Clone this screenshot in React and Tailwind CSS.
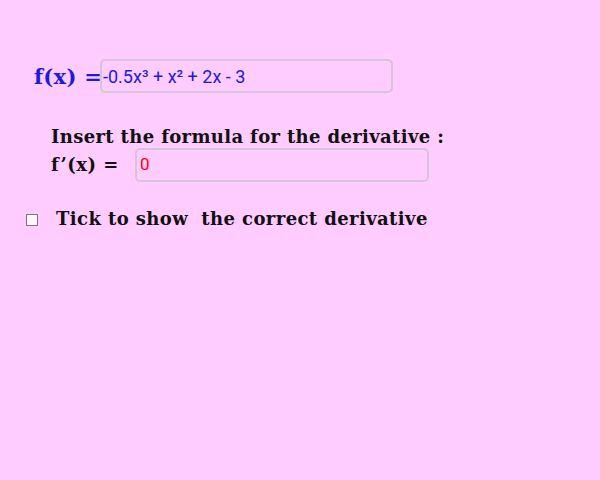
export default function App() {
  const serif = { fontFamily: '"DejaVu Serif", serif' };
  return (
    <div className="w-[600px] h-[480px] bg-[#ffccff] overflow-hidden relative">
      <div className="flex items-center pl-[34px] pt-[59px]">
        <span className="w-[66px] text-[21px] font-bold text-[#1a1ae0] leading-none whitespace-pre tracking-[0.3px]" style={serif}>f(x) =</span>
        <div className="w-[293px] h-[34px] border-2 border-[#d8c4d8] rounded-[5px] flex items-center pl-[1px] text-[18px] text-[#1a1ae0]" style={{ fontFamily: 'Roboto, sans-serif' }}>
          -0.5x³ + x² + 2x - 3
        </div>
      </div>
      <div className="pl-[51px] mt-[33px]">
        <div className="text-[18px] font-bold text-[#111] leading-[21px] tracking-[0.35px]" style={serif}>
          Insert the formula for the derivative :
        </div>
        <div className="flex items-center mt-[1px]">
          <span className="text-[18px] font-bold text-[#111] leading-none w-[84px] tracking-[0.5px] whitespace-pre" style={serif}>f’(x) = </span>
          <div className="w-[294px] h-[34px] border-2 border-[#d8c4d8] rounded-[5px] flex items-center pl-[3px] text-[17px] text-[#ff0000]" style={{ fontFamily: 'Roboto, sans-serif' }}>
            0
          </div>
        </div>
      </div>
      <div className="flex items-center pl-[26px] mt-[23px]">
        <div className="w-[12px] h-[12px] border border-[#777] bg-[#fbf6fb] mr-[18px] mt-[3px]"></div>
        <span className="text-[18px] font-bold text-[#111] whitespace-pre tracking-[0.4px]" style={serif}>Tick to show  the correct derivative</span>
      </div>
    </div>
  );
}
